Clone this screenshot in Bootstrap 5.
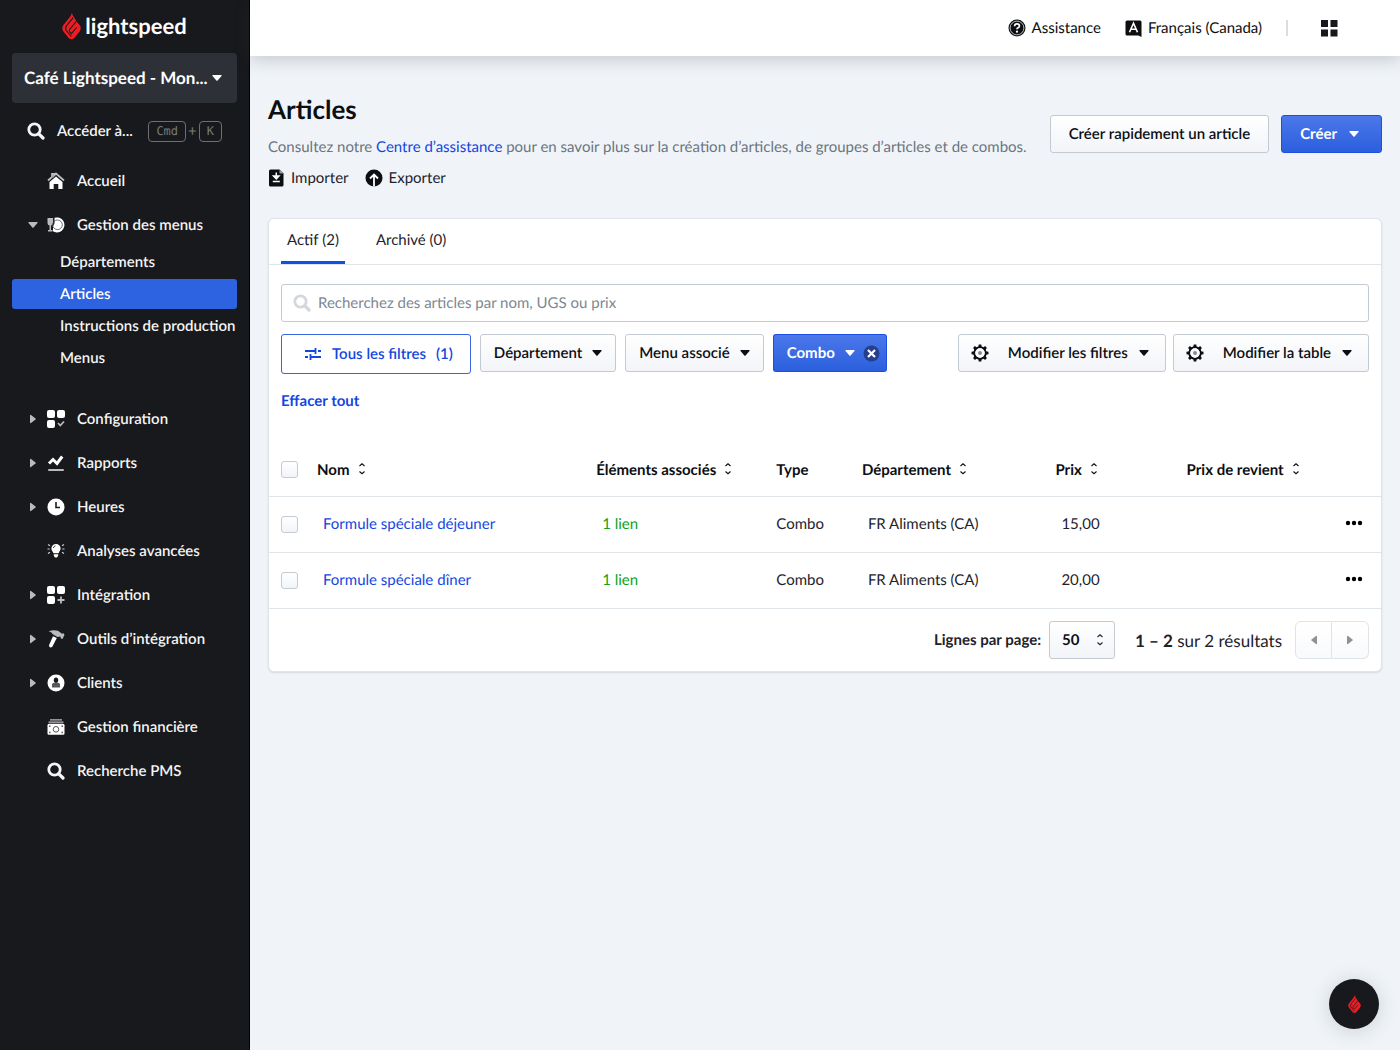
<!DOCTYPE html>
<html lang="fr-CA">
<head>
<meta charset="utf-8">
<meta name="viewport" content="width=device-width, initial-scale=1">
<title>Articles</title>
<link href="https://cdn.jsdelivr.net/npm/bootstrap@5.3.0/dist/css/bootstrap.min.css" rel="stylesheet">
<style>
  :root { --ink: #0c0e12; --blue: #1346e0; --line: #dfe4e9; --night: #18191c; }
  body { font-family: Lato, "Liberation Sans", sans-serif; font-size: 15px; line-height: 20px; color: #1d222b; background: #f0f4f8; text-rendering: geometricPrecision; }
  svg { display: block; flex: none; }
  a { text-decoration: none; color: var(--blue); }
  button, input, select { text-rendering: inherit; }
  .caret { width: 10px; height: 6px; fill: currentColor; }

  /* sidebar */
  .side { width: 250px; background: var(--night); color: #fff; font-weight: 600; padding: 12px; border-right: 1px solid #000; }
  .side a { color: #f4f5f6; }
  .brand { height: 28px; gap: 4px; font-size: 22px; line-height: 28px; font-weight: 700; margin-bottom: 13px; }
  .account { height: 50px; padding: 0 15px 0 12px; background: #2e3038; color: #fff; font-size: 17px; font-weight: 700; border: 0; border-radius: 4px; white-space: nowrap; }
  .goto { height: 56px; padding: 0 15px; gap: 12px; white-space: nowrap; }
  .keys { gap: 2px; color: #77797d; font-weight: 400; }
  .keycap { border: 1px solid #6d6f73; border-radius: 4px; color: #77797d; background: none; font-family: "DejaVu Sans Mono", monospace; font-size: 12px; line-height: 19px; padding: 0 7px; }
  .menu-item { height: 44px; padding-left: 16px; gap: 12px; }
  .menu-item .tri { width: 10px; height: 10px; fill: #b9bbbe; margin-right: -3px; }
  .submenu { margin-bottom: 24px; }
  .submenu a { height: 30px; padding-left: 48px; margin-bottom: 2px; border-radius: 3px; white-space: nowrap; }
  .submenu a.active { background: #2d62e0; color: #fff; }

  /* top bar */
  .topbar { height: 56px; background: #fff; box-shadow: 0 4px 16px rgba(40, 55, 70, .22); padding-right: 62px; z-index: 2; }
  .topbar a { color: var(--ink); gap: 6px; }
  .divider { width: 2px; height: 16px; background: #d9dde0; }

  /* page */
  .page { padding: 37px 18px 40px; }
  .page-head { margin-bottom: 30px; }
  h1 { font-size: 26px; line-height: 32px; font-weight: 700; color: var(--ink); margin-bottom: 12px; }
  .lead-in { color: #6b7480; margin-bottom: 11px; }
  .head-actions { padding-top: 22px; gap: 12px; }
  .tool { color: #1d222b; gap: 6px; }
  .ctl { height: 38px; border: 1px solid #c3cad1; border-radius: 3px; background: linear-gradient(#fff, #f2f4f8); color: var(--ink); font-size: 15px; line-height: 20px; font-weight: 600; padding: 0 13px; display: inline-flex; align-items: center; gap: 10px; white-space: nowrap; }
  .ctl-wide { padding: 0 18px; gap: 12px; }
  .ctl-primary { background: linear-gradient(#4b78ea, #2b5fde); border-color: #1b4fe0; color: #fff; font-weight: 700; }
  .ctl-create { padding-right: 22px; }
  .ctl-outline { height: 40px; background: #fff; border-color: #3863e4; color: var(--blue); padding: 0 17px 0 22px; }
  .combo { padding-right: 8px; border-right: 0; border-radius: 3px 0 0 3px; }
  .combo-x { padding: 0 6px 0 0; border-left: 0; border-radius: 0 3px 3px 0; }
  .ctl-gear { gap: 11px; padding-right: 16px; padding-left: 12px; }
  .ctl-gear svg:first-child { margin-right: 8px; }
  .view-tools { gap: 7px; }
  .panel { background: #fff; border: 1px solid var(--line); border-radius: 6px; box-shadow: 0 1px 2px rgba(40, 55, 70, .14); }
  .tabs { border-bottom: 1px solid var(--line); padding: 0 12px; gap: 25px; }
  .tabs a { color: #1d222b; padding: 11px 6px; border-bottom: 3px solid transparent; }
  .tabs a.active { border-color: #1150e4; }
  .filters { padding: 19px 12px 33px; }
  .filterbar { margin: 12px 0 17px; gap: 9px; }
  .search-icon { left: 12px; top: 10px; }
  .search { height: 38px; border: 1px solid #c3cad1; border-radius: 3px; font-size: 15px; padding: 0 12px 0 36px; color: var(--ink); }
  .search::placeholder { color: #7d8790; }
  .clear { font-weight: 700; }

  .items { table-layout: fixed; margin: 0; }
  .items th, .items td { padding: 0; vertical-align: middle; border-bottom: 1px solid var(--line); color: #1d222b; white-space: nowrap; }
  .items th { height: 52px; font-weight: 700; color: var(--ink); }
  .items td { height: 56px; }
  .items .pick { width: 48px; padding-left: 12px; }
  .items .inset { padding-left: 6px; }
  .w-name { width: 25.1%; } .w-link { width: 16.2%; } .w-type { width: 7.7%; } .w-dept { width: 17.4%; } .w-price { width: 11.8%; } .w-more { width: 48px; }
  .items .form-check-input { width: 17px; height: 17px; margin: 0; display: block; border: 1px solid #c3cad1; border-radius: 3px; background: linear-gradient(#fff, #f2f4f8); }
  .sort { border: 0; background: none; padding: 0; font-weight: inherit; color: inherit; display: flex; align-items: center; gap: 8px; }
  .sort svg { margin-bottom: 2px; }
  .green { color: #08a31a; }

  .pager { height: 62px; padding: 0 12px; }
  .rows { appearance: none; width: 66px; height: 38px; border: 1px solid #c3cad1; border-radius: 3px; background: linear-gradient(#fff, #f2f4f8); padding: 0 12px; font-weight: 700; color: var(--ink); }
  .rows-icon { right: 11px; top: 12px; pointer-events: none; }
  .count { font-size: 17px; margin: 2px 13px 0 20px; }
  .step { width: 37px; height: 38px; border: 1px solid var(--line); background: linear-gradient(#fff, #f9fafc); color: #8d9299; display: flex; align-items: center; justify-content: center; padding: 0; }
  .step + .step { border-left: 0; }
  .step svg { width: 10px; height: 10px; fill: currentColor; }
  .fab { right: 21px; bottom: 21px; width: 50px; height: 50px; border: 0; background: var(--night); box-shadow: 0 2px 20px rgba(40, 55, 70, .18); }
</style>
</head>
<body>
<svg width="0" height="0" class="position-absolute" aria-hidden="true">
  <symbol id="down" viewBox="0 0 10 6"><path d="M1 0h8q1 .2.5 1L5.600 5.600q-.6.500-1.200 0L.5 1Q0 .2 1 0z"/></symbol>
  <symbol id="right" viewBox="0 0 10 10"><path d="M2 1.500q0-1 1-.5l4.500 3.500q.6.500 0 1L3 9q-1 .5-1-.5z"/></symbol>
  <symbol id="left" viewBox="0 0 10 10"><path d="M8 1.500q0-1-1-.5L2.500 4.500q-.6.500 0 1L7 9q1 .5 1-.5z"/></symbol>
  <symbol id="sort" viewBox="0 0 8 14"><path d="M1.500 4 4 1.800 6.500 4M1.500 9.500 4 11.700l2.500-2.200" fill="none" stroke="currentColor" stroke-width="1.100"/></symbol>
  <symbol id="glass" viewBox="0 0 18 18"><circle cx="7.500" cy="7.500" r="5.700" fill="none" stroke="currentColor" stroke-width="2.800"/><path d="m11.800 11.800 4.200 4.200" stroke="currentColor" stroke-width="3.200" stroke-linecap="round"/></symbol>
  <symbol id="flame" viewBox="0 0 20 28"><path d="M10.500 0Q9.500 4 6 7.500L1.500 13Q-.8 16.200 1.300 19.500L7.300 26.800Q10 29.200 12.700 26.800L18.700 19.500Q20.800 16 18.500 13L15.300 9.200 12.500 4.500Q10.800 2.500 10.500 0z" fill="#ee1c24"/><path d="M11.800 5.200 4.700 13.800Q2.800 16.500 4.600 19L9.900 25M14.900 9.400 8 17.600Q7.200 18.800 8 19.800L9.900 22 15.500 15.300" fill="none" stroke="#18191c" stroke-width="1.100"/></symbol>
  <symbol id="gear" viewBox="0 0 18 18"><circle cx="9" cy="9" r="5.700" fill="none" stroke="#0c0e12" stroke-width="2"/><g fill="#0c0e12"><path id="tooth" d="M7.300 3.500 7.700.5h2.600l.4 3zM7.300 14.500l.4 3h2.600l.4-3z"/><use href="#tooth" transform="rotate(45 9 9)"/><use href="#tooth" transform="rotate(90 9 9)"/><use href="#tooth" transform="rotate(135 9 9)"/></g><circle cx="9" cy="9" r="4.700" fill="#fbfbfd"/><circle cx="9" cy="9" r="2" fill="#888b90"/></symbol>
  <symbol id="dots" viewBox="0 0 18 6"><circle cx="3" cy="3" r="2.200"/><circle cx="9" cy="3" r="2.200"/><circle cx="15" cy="3" r="2.200"/></symbol>
</svg>

<div class="d-flex min-vh-100">
  <aside class="side flex-shrink-0">
    <div class="brand d-flex align-items-center justify-content-center">
      <svg width="19" height="28"><use href="#flame"/></svg><span>lightspeed</span>
    </div>
    <button type="button" class="account w-100 d-flex align-items-center justify-content-between">
      <span>Café Lightspeed - Mon...</span><svg class="caret"><use href="#down"/></svg>
    </button>
    <a href="#" class="goto d-flex align-items-center">
      <svg width="18" height="18"><use href="#glass"/></svg><span>Accéder à...</span>
      <span class="keys d-flex align-items-center ms-auto"><kbd class="keycap">Cmd</kbd><span>+</span><kbd class="keycap">K</kbd></span>
    </a>
    <nav aria-label="Menu principal">
      <a href="#" class="menu-item d-flex align-items-center"><svg class="tri"></svg>
        <svg width="18" height="18" viewBox="0 0 18 18"><path d="M1 8.500 5 5V2h2v1.500L9 1.500l8 7" fill="none" stroke="#b9bbbe" stroke-width="1.800"/><path d="M9 4.500 2.500 10v7h4.200v-5h4.600v5h4.200v-7z" fill="#fff"/></svg>Accueil</a>
      <a href="#" class="menu-item d-flex align-items-center" aria-expanded="true"><svg class="tri" viewBox="0 -2 10 10"><use href="#down" width="10" height="6"/></svg>
        <svg width="18" height="18" viewBox="0 0 18 18"><path d="M.5 2h5.500v5q0 2-2 2.500V14h1.500v1.500H1V14h1.500V9.500Q.5 9 .5 7z" fill="#b9bbbe"/><path d="M7.500 1.800A7.500 7.500 0 1 1 6 15.300V10q2-2 1.500-4z" fill="#fff"/><circle cx="10.500" cy="8.800" r="4.800" fill="none" stroke="#4a4c50" stroke-width=".8"/></svg>Gestion des menus</a>
      <div class="submenu">
        <a href="#" class="d-flex align-items-center">Départements</a>
        <a href="#" class="active d-flex align-items-center" aria-current="page">Articles</a>
        <a href="#" class="d-flex align-items-center">Instructions de production</a>
        <a href="#" class="d-flex align-items-center">Menus</a>
      </div>
      <a href="#" class="menu-item d-flex align-items-center"><svg class="tri"><use href="#right"/></svg>
        <svg width="18" height="18" viewBox="0 0 18 18"><g fill="#fff"><rect width="8" height="8" rx="2"/><rect x="10" width="8" height="8" rx="2"/><rect y="10" width="8" height="8" rx="2"/></g><path d="m11 13 2.300 2.500 3.700-4" fill="none" stroke="#b9bbbe" stroke-width="1.800"/></svg>Configuration</a>
      <a href="#" class="menu-item d-flex align-items-center"><svg class="tri"><use href="#right"/></svg>
        <svg width="18" height="18" viewBox="0 0 18 18"><path d="m2 9.500 4-4 4 4 5.200-7" fill="none" stroke="#fff" stroke-width="3"/><path d="M2 16h14" stroke="#b9bbbe" stroke-width="2" stroke-linecap="round"/></svg>Rapports</a>
      <a href="#" class="menu-item d-flex align-items-center"><svg class="tri"><use href="#right"/></svg>
        <svg width="18" height="18" viewBox="0 0 18 18"><circle cx="9" cy="9" r="8.500" fill="#fff"/><path d="M9 4v5.500h4" fill="none" stroke="#18191c" stroke-width="1.600"/></svg>Heures</a>
      <a href="#" class="menu-item d-flex align-items-center"><svg class="tri"></svg>
        <svg width="18" height="18" viewBox="0 0 18 18"><path d="M9 2a4.600 4.600 0 0 1 4.600 4.600c0 2.200-1.600 3-2 4.700H6.400c-.4-1.700-2-2.500-2-4.700A4.600 4.600 0 0 1 9 2zM6.800 12.300h4.400v1.500L10 15.500H8l-1.200-1.700z" fill="#fff"/><path d="M1 2.500l2 1.200M.5 7h2.200M1 11.500l2-1.200M17 2.500l-2 1.200M17.500 7h-2.200M17 11.500l-2-1.200" stroke="#d0d1d3" stroke-width="1.100"/><path d="M6.300 6q.4-1.800 2.200-2.200" fill="none" stroke="#18191c" stroke-width=".8"/></svg>Analyses avancées</a>
      <a href="#" class="menu-item d-flex align-items-center"><svg class="tri"><use href="#right"/></svg>
        <svg width="18" height="18" viewBox="0 0 18 18"><g fill="#fff"><rect width="8" height="8" rx="2"/><rect x="10" width="8" height="8" rx="2"/><rect y="10" width="8" height="8" rx="2"/></g><path d="M14 10.500v7M10.500 14h7" stroke="#b9bbbe" stroke-width="1.800"/></svg>Intégration</a>
      <a href="#" class="menu-item d-flex align-items-center"><svg class="tri"><use href="#right"/></svg>
        <svg width="18" height="18" viewBox="0 0 18 18"><path d="M6 6.200 9.800 8 5.600 16.300q-1 1.700-2.600.9-1.500-.9-.8-2.500z" fill="#fff"/><path d="M1.500 1.500Q6-.8 11 .8l4 3 1.500-.5 1 1.500-2 4.200-1.700-.6-.4-2-3 .5-5-2.900Q5 2 1.500 1.500z" fill="#b9bbbe"/></svg>Outils d’intégration</a>
      <a href="#" class="menu-item d-flex align-items-center"><svg class="tri"><use href="#right"/></svg>
        <svg width="18" height="18" viewBox="0 0 18 18"><circle cx="9" cy="9" r="8.500" fill="#fff"/><ellipse cx="9" cy="6.300" rx="2.200" ry="2.700" fill="#18191c"/><path d="M5 13.500V10q1-1.300 2.500-1.300h3Q12 8.700 13 10v3.500z" fill="#55575b"/></svg>Clients</a>
      <a href="#" class="menu-item d-flex align-items-center"><svg class="tri"></svg>
        <svg width="18" height="18" viewBox="0 0 18 18"><path d="M3 1.800h12M1.500 4.200h15" stroke="#b9bbbe" stroke-width="1.200"/><rect x=".5" y="5.800" width="17" height="11" rx="1.500" fill="#fff"/><circle cx="9" cy="11.300" r="2.800" fill="none" stroke="#55575b"/><path d="M2 7.500h1.500V9H2zM14.500 7.500H16V9h-1.500zM2 13.700h1.500v1.500H2zM14.500 13.700H16v1.500h-1.500z" fill="#55575b"/></svg>Gestion financière</a>
      <a href="#" class="menu-item d-flex align-items-center"><svg class="tri"></svg>
        <svg width="18" height="18"><use href="#glass"/></svg>Recherche PMS</a>
    </nav>
  </aside>

  <div class="flex-grow-1 d-flex flex-column">
    <header class="topbar d-flex align-items-center justify-content-end position-relative">
      <a href="#" class="d-flex align-items-center me-4"><svg width="18" height="18" viewBox="0 0 18 18"><circle cx="9" cy="9" r="8.500" fill="#0c0e12"/><circle cx="9" cy="9" r="6.900" fill="none" stroke="#fff" stroke-width=".7"/><path d="M6.600 7.200q0-2.300 2.400-2.300t2.400 2q0 1.300-1.300 1.800-1.100.4-1.100 1.500" fill="none" stroke="#fff" stroke-width="1.700"/><circle cx="9" cy="12.700" r="1.100" fill="#fff"/></svg>Assistance</a>
      <a href="#" class="d-flex align-items-center"><svg width="17" height="17" viewBox="0 0 17 17"><path d="M2 .5h13q1.500 0 1.500 1.500v15l-3-1.500H2Q.5 15.500.5 14V2Q.5.500 2 .5z" fill="#0c0e12"/><path d="m4.500 12.300 4-9 4 9M6 9.300h5" fill="none" stroke="#fff" stroke-width="1.600"/></svg>Français (Canada)</a>
      <span class="divider ms-4 me-4"></span>
      <a href="#" aria-label="Applications" class="ms-2"><svg width="18" height="18" viewBox="0 0 18 18"><path d="M1 1h7v7H1zM10.500 1h7v7h-7zM1 10.500h7v7H1zM10.500 10.500h7v7h-7z" fill="#16181b"/></svg></a>
    </header>

    <main class="page">
      <div class="page-head d-flex justify-content-between align-items-start">
        <div>
          <h1>Articles</h1>
          <p class="lead-in">Consultez notre <a href="#">Centre d’assistance</a> pour en savoir plus sur la création d’articles, de groupes d’articles et de combos.</p>
          <div class="d-flex gap-3">
            <a href="#" class="tool d-flex align-items-center"><svg width="17" height="18" viewBox="0 0 17 18"><path d="M2.500.5h9l4 4V16q0 1.500-1.500 1.500H2.500Q1 17.500 1 16V2Q1 .5 2.500.5z" fill="#0c0e12"/><path d="M11.500.5v4h4z" fill="#9a9da3"/><path d="M8.300 3.500v5M5.500 7l2.800 3L11 7zM4.800 12.500h7" fill="#fff" stroke="#fff" stroke-width="1.500"/></svg>Importer</a>
            <a href="#" class="tool d-flex align-items-center"><svg width="18" height="18" viewBox="0 0 18 18"><circle cx="9" cy="9" r="8.500" fill="#0c0e12"/><path d="M9 17.500V6M5 9.500l4-4 4 4" fill="none" stroke="#fff" stroke-width="1.800"/></svg>Exporter</a>
          </div>
        </div>
        <div class="head-actions d-flex">
          <button type="button" class="ctl ctl-wide">Créer rapidement un article</button>
          <button type="button" class="ctl ctl-wide ctl-primary ctl-create">Créer <svg class="caret"><use href="#down"/></svg></button>
        </div>
      </div>

      <section class="panel">
        <nav class="tabs d-flex" aria-label="État">
          <a href="#" class="active">Actif (2)</a>
          <a href="#">Archivé (0)</a>
        </nav>
        <div class="filters">
          <div class="position-relative d-flex">
            <svg width="18" height="18" class="search-icon position-absolute" color="#d3d8dc"><use href="#glass"/></svg>
            <input type="search" class="search w-100" placeholder="Recherchez des articles par nom, UGS ou prix" aria-label="Recherchez des articles">
          </div>
          <div class="filterbar d-flex align-items-start">
            <button type="button" class="ctl ctl-outline"><svg width="18" height="14" viewBox="0 0 18 14"><path d="M1 4h10.500M14 4h3M11.500 1v6M1 10h3M6.500 10H17M6.500 7v6" fill="none" stroke="currentColor" stroke-width="1.800"/></svg><span>Tous les filtres</span><span>(1)</span></button>
            <button type="button" class="ctl">Département <svg class="caret"><use href="#down"/></svg></button>
            <button type="button" class="ctl">Menu associé <svg class="caret"><use href="#down"/></svg></button>
            <div class="d-flex">
              <button type="button" class="ctl ctl-primary combo">Combo <svg class="caret"><use href="#down"/></svg></button>
              <button type="button" class="ctl ctl-primary combo-x" aria-label="Retirer"><svg width="17" height="17" viewBox="0 0 17 17"><circle cx="8.500" cy="8.500" r="8" fill="#253f8c"/><path d="m5 5 7 7M12 5l-7 7" stroke="#fff" stroke-width="2.200"/></svg></button>
            </div>
            <div class="view-tools ms-auto d-flex">
              <button type="button" class="ctl ctl-gear"><svg width="18" height="18"><use href="#gear"/></svg>Modifier les filtres <svg class="caret"><use href="#down"/></svg></button>
              <button type="button" class="ctl ctl-gear"><svg width="18" height="18"><use href="#gear"/></svg>Modifier la table <svg class="caret"><use href="#down"/></svg></button>
            </div>
          </div>
          <a href="#" class="clear">Effacer tout</a>
        </div>

        <table class="table items">
          <thead>
            <tr>
              <th class="pick"><input type="checkbox" class="form-check-input" aria-label="Tout sélectionner"></th>
              <th class="w-name"><button type="button" class="sort">Nom <svg width="8" height="14"><use href="#sort"/></svg></button></th>
              <th class="w-link"><button type="button" class="sort">Éléments associés <svg width="8" height="14"><use href="#sort"/></svg></button></th>
              <th class="w-type">Type</th>
              <th class="w-dept"><button type="button" class="sort">Département <svg width="8" height="14"><use href="#sort"/></svg></button></th>
              <th class="w-price"><button type="button" class="sort">Prix <svg width="8" height="14"><use href="#sort"/></svg></button></th>
              <th><button type="button" class="sort">Prix de revient <svg width="8" height="14"><use href="#sort"/></svg></button></th>
              <th class="w-more"></th>
            </tr>
          </thead>
          <tbody>
            <tr>
              <td class="pick"><input type="checkbox" class="form-check-input" aria-label="Formule spéciale déjeuner"></td>
              <td class="inset"><a href="#">Formule spéciale déjeuner</a></td>
              <td class="inset"><a href="#" class="green">1 lien</a></td>
              <td>Combo</td>
              <td class="inset">FR Aliments (CA)</td>
              <td class="inset">15,00</td>
              <td></td>
              <td><button type="button" class="sort px-2 mx-1" aria-label="Actions"><svg width="18" height="6"><use href="#dots"/></svg></button></td>
            </tr>
            <tr>
              <td class="pick"><input type="checkbox" class="form-check-input" aria-label="Formule spéciale dîner"></td>
              <td class="inset"><a href="#">Formule spéciale dîner</a></td>
              <td class="inset"><a href="#" class="green">1 lien</a></td>
              <td>Combo</td>
              <td class="inset">FR Aliments (CA)</td>
              <td class="inset">20,00</td>
              <td></td>
              <td><button type="button" class="sort px-2 mx-1" aria-label="Actions"><svg width="18" height="6"><use href="#dots"/></svg></button></td>
            </tr>
          </tbody>
        </table>

        <div class="pager d-flex align-items-center justify-content-end">
          <label for="rows" class="fw-bold me-2">Lignes par page:</label>
          <div class="position-relative">
            <select id="rows" class="rows"><option>50</option></select>
            <svg width="8" height="14" class="rows-icon position-absolute"><use href="#sort"/></svg>
          </div>
          <div class="count"><strong>1 – 2</strong> sur 2 résultats</div>
          <div class="d-flex">
            <button type="button" class="step rounded-start" aria-label="Précédent"><svg><use href="#left"/></svg></button>
            <button type="button" class="step rounded-end" aria-label="Suivant"><svg><use href="#right"/></svg></button>
          </div>
        </div>
      </section>
    </main>
  </div>
</div>

<button type="button" class="fab position-fixed rounded-circle d-flex align-items-center justify-content-center" aria-label="Aide"><svg width="13" height="18"><use href="#flame"/></svg></button>
<script src="https://cdn.jsdelivr.net/npm/bootstrap@5.3.0/dist/js/bootstrap.bundle.min.js"></script>
</body>
</html>
